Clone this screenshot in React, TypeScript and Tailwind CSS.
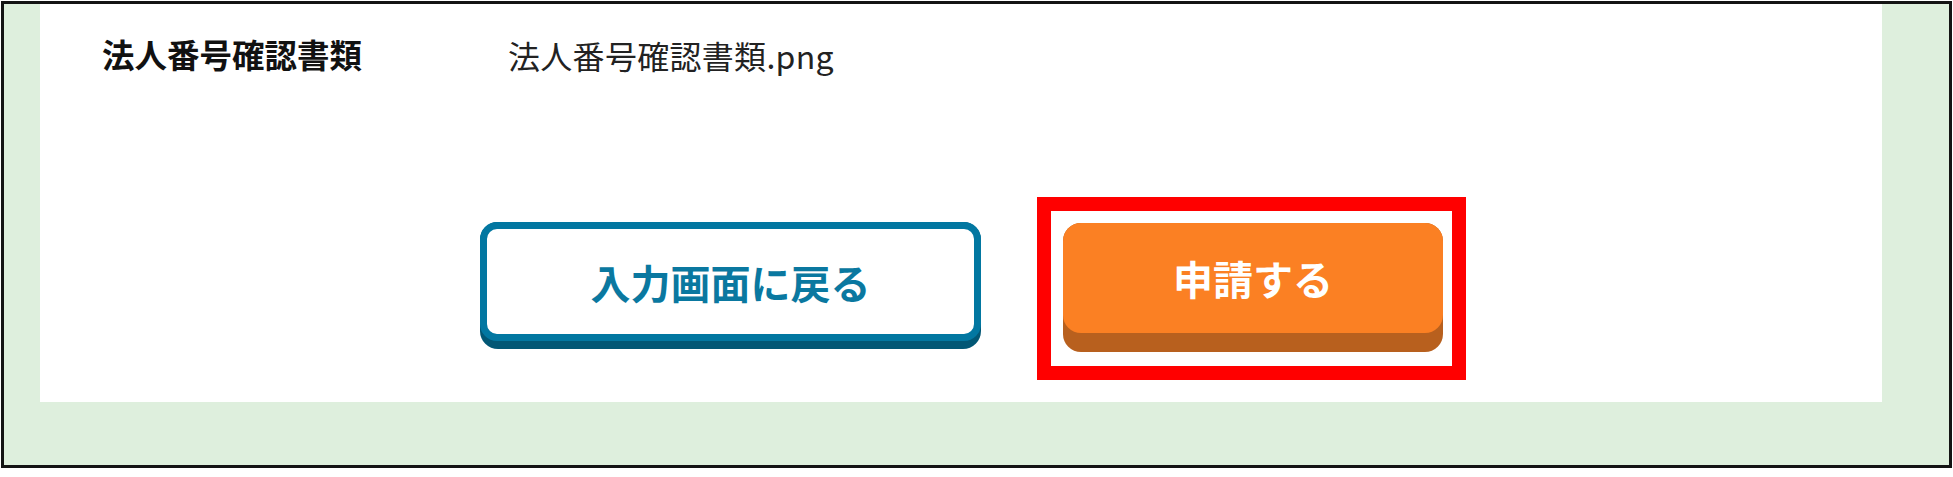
export default function App() {
  const font = { fontFamily: '"Noto Sans CJK JP", "Noto Sans", sans-serif' };

  return (
    <div className="w-[1953px] h-[477px] bg-white pl-[1px] pt-[1px]" style={font}>
      {/* framed screenshot */}
      <div className="w-[1951px] h-[467px] border-[3px] border-[#141414] bg-[#deefdd] pl-[36px]">
        <div className="w-[1842px] h-[398px] bg-white flex flex-col">
          {/* file row */}
          <div className="h-[100px] flex items-center pl-[62px]">
            <span className="w-[406px] text-[32.5px] font-bold text-[#111] leading-none">
              法人番号確認書類
            </span>
            <span className="mt-[2px] text-[32px] text-[#222] leading-none tracking-[0.3px]">
              法人番号確認書類.png
            </span>
          </div>

          {/* actions */}
          <div className="mt-[93px] pl-[440px] flex items-start gap-[56px]">
            <button className="mt-[25px] w-[501px] h-[127px] rounded-[18px] bg-[#025775] pb-[8px] focus:outline-none">
              <div className="h-full rounded-[17px] border-[7px] border-[#0277a1] bg-white flex items-center justify-center">
                <span className="text-[40px] font-bold text-[#0a78a0] leading-none">
                  入力画面に戻る
                </span>
              </div>
            </button>

            {/* highlighted submit */}
            <div className="border-[14px] border-[#ff0000] w-[429px] h-[183px] pl-[12px] pt-[12px]">
              <button className="w-[380px] h-[129px] rounded-[18px] bg-[#b8601e] pb-[19px] focus:outline-none">
                <div className="h-full rounded-[18px] bg-[#fb8023] flex items-center justify-center">
                  <span className="text-[40px] font-bold text-white leading-none">
                    申請する
                  </span>
                </div>
              </button>
            </div>
          </div>
        </div>
      </div>
    </div>
  );
}
